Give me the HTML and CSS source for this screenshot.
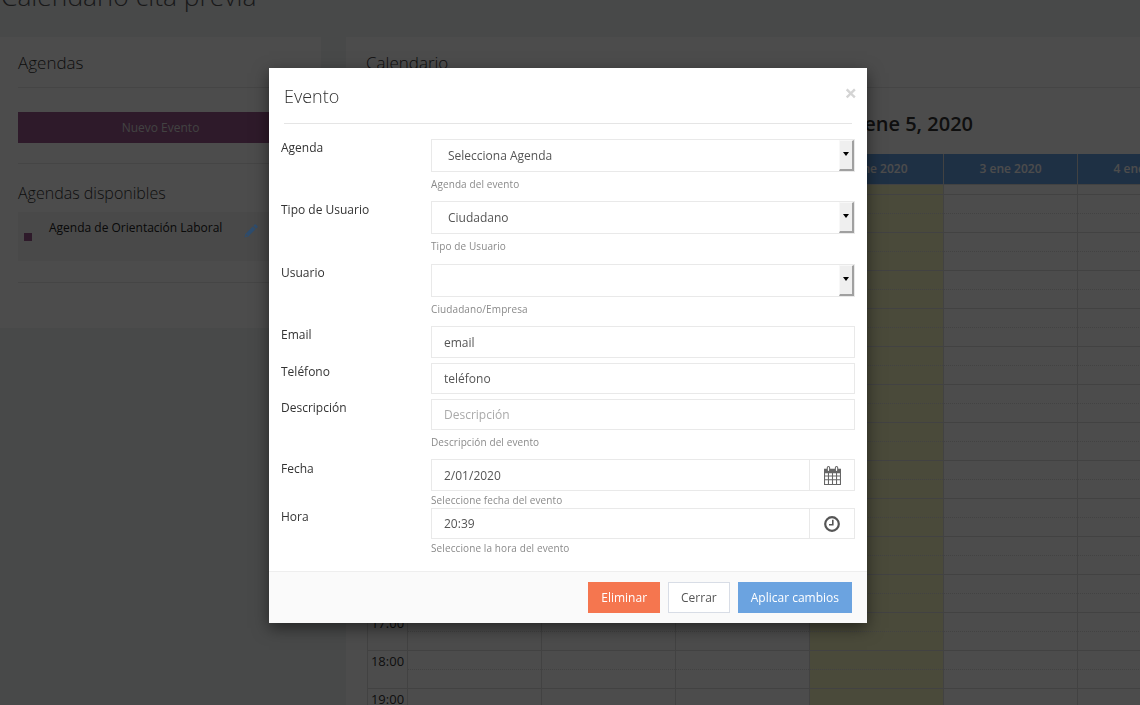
FILE: index.html
```html
<!doctype html>
<html lang="es">
<head>
  <meta charset="UTF-8">
  <meta name="viewport" content="width=device-width, initial-scale=1.0">
  <title>Calendario cita previa</title>
  <link rel="stylesheet" href="styles.css">
</head>
<body>
  <div class="page">
    <h1 class="page-title">Calendario cita previa</h1>

    <div class="columns">
      <aside class="panel panel-agendas">
        <h2 class="panel-title">Agendas</h2>
        <div class="new-event">
          <button class="btn-new" type="button">Nuevo Evento</button>
        </div>
        <h2 class="panel-title available">Agendas disponibles</h2>
        <div class="agenda-list">
          <div class="agenda-row">
            <span class="agenda-color"></span>
            <span class="agenda-name">Agenda de Orientación Laboral</span>
            <svg class="agenda-edit" width="14" height="14" viewBox="0 0 14 14"><path fill="#2e4d6e" fill-rule="evenodd" d="M10.6.6a1 1 0 0 1 1.4 0L13.4 2a1 1 0 0 1 0 1.4l-1.2 1.2L9.4 1.8zM8.7 2.5l2.8 2.8-7.2 7.2L.4 13.6l1.1-3.9zM2.3 10.2l-.7 2.2 2.2-.7z"/></svg>
            <svg class="agenda-delete" width="12" height="14" viewBox="0 0 12 14"><path fill="#999" d="M1 3h10v1H1zm1 2h8v9H2zm2-4h4v1H4z"/></svg>
          </div>
        </div>
      </aside>

      <main class="panel panel-calendar">
        <h2 class="panel-title">Calendario</h2>
        <div class="cal-title">Enero 2 &ndash; ene 5, 2020</div>
        <div class="cal-head">
          <div class="cal-time"></div>
          <div class="cal-day">30 dic 2019</div>
          <div class="cal-day">31 dic 2019</div>
          <div class="cal-day">1 ene 2020</div>
          <div class="cal-day">2 ene 2020</div>
          <div class="cal-day">3 ene 2020</div>
          <div class="cal-day">4 ene 2020</div>
        </div>
        <div class="cal-grid">
          <div class="cal-allday">
            <div class="cal-time"></div>
            <div class="cal-cell"></div><div class="cal-cell"></div><div class="cal-cell"></div>
            <div class="cal-cell today"></div><div class="cal-cell"></div><div class="cal-cell"></div>
          </div>
          <div class="cal-hour"><div class="cal-time">6:00</div><div class="cal-cell"></div><div class="cal-cell"></div><div class="cal-cell"></div><div class="cal-cell today"></div><div class="cal-cell"></div><div class="cal-cell"></div></div>
          <div class="cal-hour"><div class="cal-time">7:00</div><div class="cal-cell"></div><div class="cal-cell"></div><div class="cal-cell"></div><div class="cal-cell today"></div><div class="cal-cell"></div><div class="cal-cell"></div></div>
          <div class="cal-hour"><div class="cal-time">8:00</div><div class="cal-cell"></div><div class="cal-cell"></div><div class="cal-cell"></div><div class="cal-cell today"></div><div class="cal-cell"></div><div class="cal-cell"></div></div>
          <div class="cal-hour"><div class="cal-time">9:00</div><div class="cal-cell"></div><div class="cal-cell"></div><div class="cal-cell"></div><div class="cal-cell today"></div><div class="cal-cell"></div><div class="cal-cell"></div></div>
          <div class="cal-hour"><div class="cal-time">10:00</div><div class="cal-cell"></div><div class="cal-cell"></div><div class="cal-cell"></div><div class="cal-cell today"></div><div class="cal-cell"></div><div class="cal-cell"></div></div>
          <div class="cal-hour"><div class="cal-time">11:00</div><div class="cal-cell"></div><div class="cal-cell"></div><div class="cal-cell"></div><div class="cal-cell today"></div><div class="cal-cell"></div><div class="cal-cell"></div></div>
          <div class="cal-hour"><div class="cal-time">12:00</div><div class="cal-cell"></div><div class="cal-cell"></div><div class="cal-cell"></div><div class="cal-cell today"></div><div class="cal-cell"></div><div class="cal-cell"></div></div>
          <div class="cal-hour"><div class="cal-time">13:00</div><div class="cal-cell"></div><div class="cal-cell"></div><div class="cal-cell"></div><div class="cal-cell today"></div><div class="cal-cell"></div><div class="cal-cell"></div></div>
          <div class="cal-hour"><div class="cal-time">14:00</div><div class="cal-cell"></div><div class="cal-cell"></div><div class="cal-cell"></div><div class="cal-cell today"></div><div class="cal-cell"></div><div class="cal-cell"></div></div>
          <div class="cal-hour"><div class="cal-time">15:00</div><div class="cal-cell"></div><div class="cal-cell"></div><div class="cal-cell"></div><div class="cal-cell today"></div><div class="cal-cell"></div><div class="cal-cell"></div></div>
          <div class="cal-hour"><div class="cal-time">16:00</div><div class="cal-cell"></div><div class="cal-cell"></div><div class="cal-cell"></div><div class="cal-cell today"></div><div class="cal-cell"></div><div class="cal-cell"></div></div>
          <div class="cal-hour"><div class="cal-time">17:00</div><div class="cal-cell"></div><div class="cal-cell"></div><div class="cal-cell"></div><div class="cal-cell today"></div><div class="cal-cell"></div><div class="cal-cell"></div></div>
          <div class="cal-hour"><div class="cal-time">18:00</div><div class="cal-cell"></div><div class="cal-cell"></div><div class="cal-cell"></div><div class="cal-cell today"></div><div class="cal-cell"></div><div class="cal-cell"></div></div>
          <div class="cal-hour"><div class="cal-time">19:00</div><div class="cal-cell"></div><div class="cal-cell"></div><div class="cal-cell"></div><div class="cal-cell today"></div><div class="cal-cell"></div><div class="cal-cell"></div></div>
        </div>
      </main>
    </div>
  </div>

  <div class="backdrop"></div>

  <div class="modal">
    <div class="modal-header">
      <h3 class="modal-title">Evento</h3>
      <span class="modal-close">&times;</span>
    </div>

    <form class="modal-body">
      <div class="row row-select">
        <label>Agenda</label>
        <div class="field">
          <div class="select-wrap">
            <select><option>Selecciona Agenda</option></select>
            <span class="select-arrow"></span>
          </div>
          <small>Agenda del evento</small>
        </div>
      </div>
      <div class="row row-select row-tall">
        <label>Tipo de Usuario</label>
        <div class="field">
          <div class="select-wrap">
            <select><option>Ciudadano</option></select>
            <span class="select-arrow"></span>
          </div>
          <small>Tipo de Usuario</small>
        </div>
      </div>
      <div class="row row-select">
        <label>Usuario</label>
        <div class="field">
          <div class="select-wrap">
            <select><option></option></select>
            <span class="select-arrow"></span>
          </div>
          <small>Ciudadano/Empresa</small>
        </div>
      </div>
      <div class="row row-email">
        <label>Email</label>
        <div class="field"><input type="text" value="email"></div>
      </div>
      <div class="row row-phone">
        <label>Teléfono</label>
        <div class="field"><input class="input-sm" type="text" value="teléfono"></div>
      </div>
      <div class="row row-desc">
        <label>Descripción</label>
        <div class="field">
          <input class="input-sm" type="text" placeholder="Descripción">
          <small>Descripción del evento</small>
        </div>
      </div>
      <div class="row row-date">
        <label>Fecha</label>
        <div class="field">
          <div class="input-group">
            <input type="text" value="2/01/2020">
            <span class="addon">
              <svg width="17" height="19" viewBox="1 0.4 16 17.6" preserveAspectRatio="none"><path fill="#666" fill-rule="evenodd" d="M1 3h2.6V2a1.6 1.6 0 0 1 3.2 0v1h4.4V2a1.6 1.6 0 0 1 3.2 0v1H17v15H1zM4.6 2v2.4a.6.6 0 0 0 1.2 0V2a.6.6 0 0 0-1.2 0zm7.6 0v2.4a.6.6 0 0 0 1.2 0V2a.6.6 0 0 0-1.2 0zM2 7v2.2h2.7V7zm3.7 0v2.2h2.8V7zm3.8 0v2.2h2.8V7zm3.8 0v2.2H16V7zM2 10.2v2.5h2.7v-2.5zm3.7 0v2.5h2.8v-2.5zm3.8 0v2.5h2.8v-2.5zm3.8 0v2.5H16v-2.5zM2 13.7V17h2.7v-3.3zm3.7 0V17h2.8v-3.3zm3.8 0V17h2.8v-3.3zm3.8 0V17H16v-3.3z"/></svg>
            </span>
          </div>
          <small>Seleccione fecha del evento</small>
        </div>
      </div>
      <div class="row row-time">
        <label>Hora</label>
        <div class="field">
          <div class="input-group">
            <input class="input-sm" type="text" value="20:39">
            <span class="addon">
              <svg width="16" height="16" viewBox="0 0 16 16"><circle cx="8" cy="8" r="6.8" fill="none" stroke="#555" stroke-width="2.2"/><path fill="none" stroke="#555" stroke-width="1.6" d="M8.8 3.8V8.8H5"/></svg>
            </span>
          </div>
          <small>Seleccione la hora del evento</small>
        </div>
      </div>
    </form>

    <div class="modal-footer">
      <button class="btn btn-danger" type="button">Eliminar</button>
      <button class="btn btn-default" type="button">Cerrar</button>
      <button class="btn btn-primary" type="button">Aplicar cambios</button>
    </div>
  </div>
</body>
</html>
```

FILE: styles.css
```css
* {
  box-sizing: border-box;
}

html, body {
  height: 100%;
}

body {
  margin: 0;
  overflow: hidden;
  font-family: "Open Sans", sans-serif;
  font-size: 12px;
  color: #333;
  background-color: #f0f3f5;
}

/* page behind the dialog */
.page {
  height: 705px;
  overflow: hidden;
}

.page-title {
  margin: -22px 0 0;
  padding-left: 1px;
  height: 59px;
  font-size: 26.4px;
  font-weight: 300;
  line-height: 36px;
  color: #555;
}

.columns {
  display: flex;
  gap: 25px;
}

.panel {
  background-color: #fff;
}

.panel-agendas {
  flex: 0 0 321px;
  height: 291px;
  padding: 0 18px;
}

.panel-calendar {
  flex: 1;
  min-width: 0;
  height: 668px;
  padding: 0 0 0 20px;
  overflow: hidden;
}

.panel-title {
  margin: 0;
  height: 51px;
  padding-top: 13px;
  font-size: 17px;
  font-weight: 300;
  line-height: 25px;
  color: #333;
  border-bottom: 1px solid #e7e7e7;
}

.new-event {
  height: 76px;
  padding-top: 24px;
  border-bottom: 1px solid #e7e7e7;
}

.btn-new {
  display: block;
  width: 100%;
  height: 31px;
  border: 0;
  font: 12px "Open Sans", sans-serif;
  color: #ddd;
  background-color: #99578c;
}

.available {
  height: 48px;
  padding-top: 17px;
  font-size: 16px;
  border-bottom: 0;
}

.agenda-list {
  height: 71px;
  border-bottom: 1px solid #e7e7e7;
}

.agenda-row {
  display: flex;
  align-items: flex-start;
  height: 49px;
  background-color: #f5f5f5;
}

.agenda-color {
  width: 8px;
  height: 8px;
  margin: 21px 0 0 6px;
  background-color: #99578c;
}

.agenda-name {
  margin: 7px 0 0 17px;
  width: 194px;
  flex: none;
  font-size: 12px;
  line-height: 18px;
  color: #222;
}

/* this one shows brighter than the dimmed page in the reference */
.agenda-edit {
  position: relative;
  z-index: 2;
  margin: 12px 0 0 1px;
}

.agenda-delete {
  margin: 11px 0 0 10px;
}

.cal-title {
  height: 66px;
  padding-top: 23px;
  padding-right: 167px;
  text-align: right;
  font-size: 20px;
  font-weight: 600;
  line-height: 26px;
  color: #333;
}

.cal-head, .cal-allday, .cal-hour {
  display: grid;
  grid-template-columns: 40px repeat(6, 134px);
  width: 844px;
  margin-left: 1px;
}

.cal-head {
  height: 30px;
  background-color: #67a0e3;
}

.cal-day {
  font-size: 12px;
  font-weight: 600;
  line-height: 30px;
  text-align: center;
  color: #fff;
  border-left: 1px solid #ddd;
}

.cal-allday {
  height: 10px;
}

.cal-hour {
  height: 38px;
}

.cal-time {
  border-left: 1px solid #ddd;
  border-top: 1px solid #ddd;
  font-size: 13px;
  line-height: 18px;
  padding-top: 1px;
  text-align: center;
  color: #333;
}

.cal-head .cal-time {
  border: 0;
}

.cal-cell {
  border-left: 1px solid #ddd;
  border-top: 1px solid #ddd;
  background-image: linear-gradient(90deg, #ddd 50%, transparent 50%);
  background-size: 2px 1px;
  background-repeat: repeat-x;
  background-position: 0 18px;
}

.cal-allday .cal-cell {
  background-image: none;
}

.today {
  background-color: #f8f8c4;
}

/* dialog */
.backdrop {
  position: fixed;
  inset: 0;
  z-index: 1;
  background-color: #000;
  opacity: .7;
}

.modal {
  position: fixed;
  top: 68px;
  left: 269px;
  z-index: 3;
  display: flex;
  flex-direction: column;
  width: 598px;
  height: 555px;
  background-color: #fff;
  box-shadow: 0 5px 15px rgba(0, 0, 0, .5);
}

.modal-header {
  display: flex;
  justify-content: space-between;
  height: 56px;
  margin: 0 15px;
  border-bottom: 1px solid #e5e5e5;
}

.modal-title {
  margin: 0;
  padding-top: 15px;
  font-size: 18px;
  font-weight: 300;
  line-height: 26px;
  color: #333;
}

.modal-close {
  margin: 13px -5px 0 0;
  font-size: 22px;
  font-weight: 700;
  line-height: 22px;
  color: #d4d4d4;
}

.modal-body {
  flex: 1;
  padding: 15px 12px 0;
}

.row {
  display: flex;
}

.row label {
  flex: 0 0 150px;
  padding-top: 1px;
  font-size: 12px;
  line-height: 16px;
  color: #333;
}

.row-date label {
  padding-top: 2px;
}

.field {
  flex: 1;
  min-width: 0;
}

.row-select { height: 62px; }
.row-tall { height: 63px; }
.row-email { height: 37px; }
.row-phone { height: 36px; }
.row-desc { height: 60px; }
.row-date { height: 49px; }

.row small {
  display: block;
  font-size: 10px;
  line-height: 14px;
  letter-spacing: .1px;
  color: #8a8a8a;
}

.row-select small, .row-desc small { margin-top: 5px; }
.row-date small, .row-time small { margin-top: 2px; }

input, select {
  display: block;
  width: 100%;
  height: 32px;
  padding: 0 12px;
  border: 1px solid #e9e9e9;
  border-radius: 0;
  font: 12px "Open Sans", sans-serif;
  color: #555;
  background-color: #fff;
  outline: 0;
}

input.input-sm {
  height: 31px;
}

input::placeholder {
  color: #aaa;
}

.select-wrap {
  position: relative;
}

select {
  height: 33px;
  padding-left: 16px;
  appearance: none;
}

.select-arrow {
  position: absolute;
  top: 1px;
  right: 1px;
  width: 15px;
  height: 31px;
  background-color: #efefef;
  border-top: 1px solid #f8f8f8;
  border-left: 1px solid #f8f8f8;
  border-right: 2px solid #a0a0a0;
  border-bottom: 2px solid #a0a0a0;
}

.select-arrow::after {
  content: "";
  position: absolute;
  top: 11px;
  left: 3px;
  border-top: 4px solid #000;
  border-left: 3.5px solid transparent;
  border-right: 3.5px solid transparent;
}

.input-group {
  display: flex;
}

.input-group input {
  flex: 1;
  min-width: 0;
}

.addon {
  display: flex;
  flex: 0 0 45px;
  align-items: center;
  justify-content: center;
  border: 1px solid #e9e9e9;
  border-left: 0;
}

.modal-footer {
  display: flex;
  justify-content: flex-end;
  gap: 8px;
  height: 52px;
  padding: 10px 15px 0;
  background-color: #fafafa;
  border-top: 1px solid #eee;
}

.btn {
  height: 31px;
  padding: 0 12px;
  border: 1px solid transparent;
  font: 12px "Open Sans", sans-serif;
  color: #fff;
}

.btn-danger {
  background-color: #f5764f;
}

.btn-default {
  color: #555;
  background-color: #fff;
  border-color: #d8dde6;
}

.btn-primary {
  background-color: #6ba3e0;
}
```
